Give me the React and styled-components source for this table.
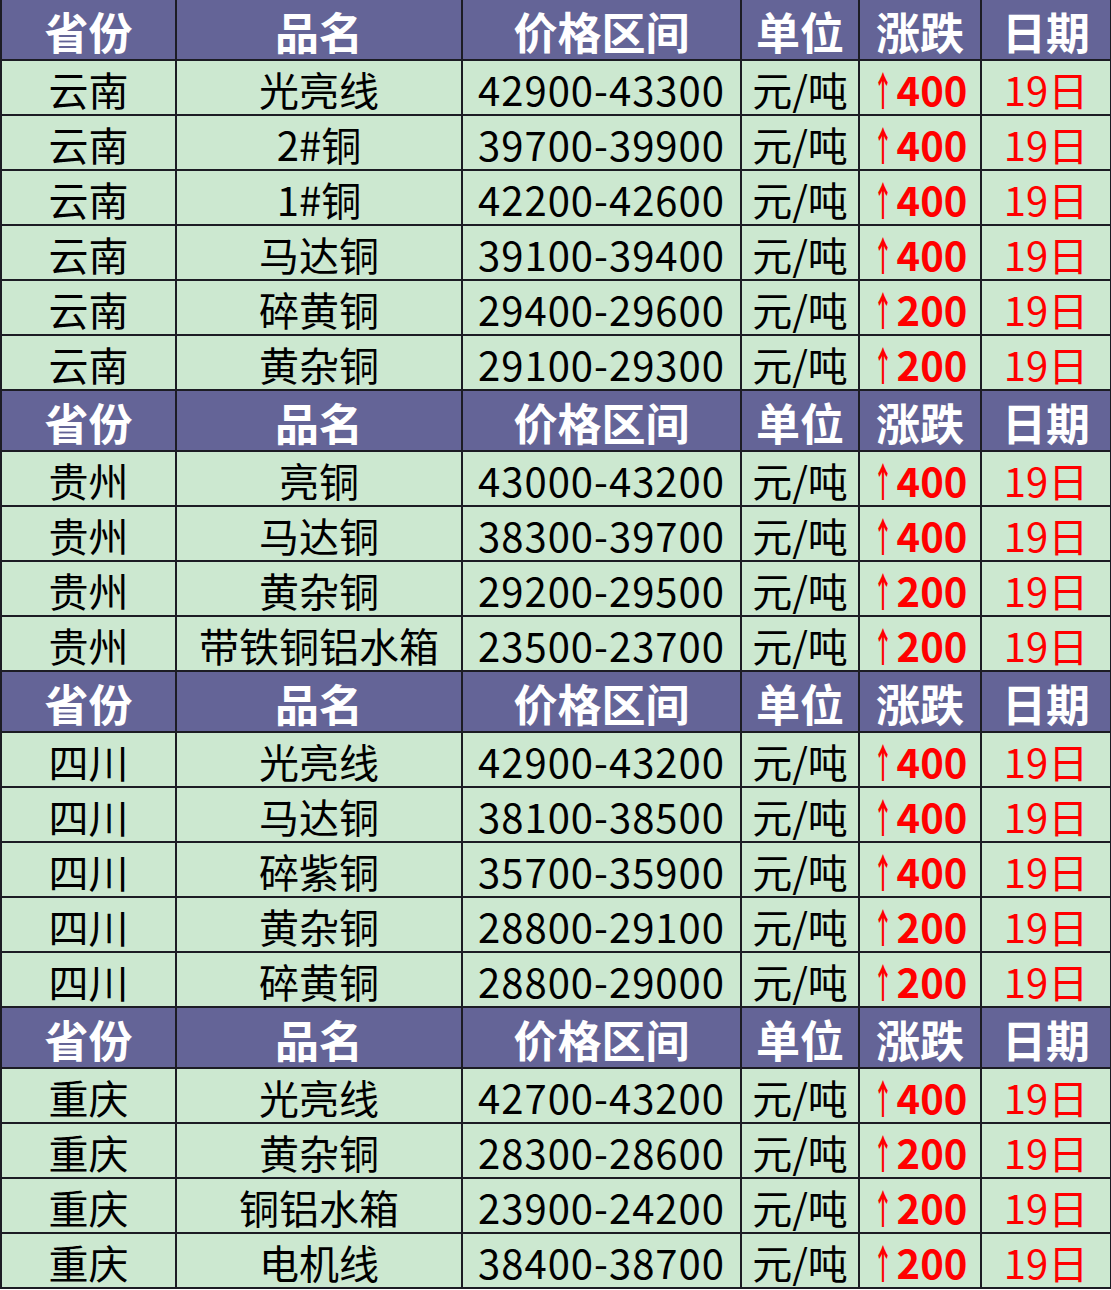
import React from 'react'
import styled, { createGlobalStyle } from 'styled-components'

const GlobalStyle = createGlobalStyle`
  html, body {
    margin: 0;
    padding: 0;
    background: #ffffff;
  }
  body {
    font-family: "Noto Sans CJK SC", "Noto Sans", sans-serif;
  }
`

const COLUMNS = '175px 286px 279px 118px 122px 130px'

const Sheet = styled.div`
  width: 1110px;
  display: flex;
  flex-direction: column;
  border-left: 2px solid #1c1c24;
  box-sizing: border-box;
`

const Row = styled.div`
  display: grid;
  grid-template-columns: ${COLUMNS};
  height: ${({ $head }) => ($head ? '61px' : '55px')};
  background: ${({ $head }) => ($head ? '#646497' : '#cce8d0')};
  box-sizing: border-box;
`

const Cell = styled.div`
  display: flex;
  align-items: center;
  justify-content: center;
  box-sizing: border-box;
  border-right: 2px solid #1c1c24;
  border-bottom: 2px solid #1c1c24;
  white-space: nowrap;
  font-size: ${({ $head }) => ($head ? '44px' : '40px')};
  font-weight: ${({ $head, $bold }) => ($head || $bold ? 700 : 400)};
  color: ${({ $head, $red }) => ($head ? '#ffffff' : $red ? '#ff0000' : '#000000')};
  letter-spacing: ${({ $wide }) => ($wide ? '1px' : '0')};
  line-height: 1;
  padding-top: 2px;
`

const Arrow = styled.span`
  display: inline-block;
  font-family: "Noto Sans CJK SC", sans-serif;
  font-weight: 700;
  font-size: 40px;
  transform: scaleX(0.5);
  margin: 0 -6px 0 -10px;
`

const HEAD = ['省份', '品名', '价格区间', '单位', '涨跌', '日期']

const GROUPS = [
  {
    province: '云南',
    items: [
      ['光亮线', '42900-43300', 400],
      ['2#铜', '39700-39900', 400],
      ['1#铜', '42200-42600', 400],
      ['马达铜', '39100-39400', 400],
      ['碎黄铜', '29400-29600', 200],
      ['黄杂铜', '29100-29300', 200],
    ],
  },
  {
    province: '贵州',
    items: [
      ['亮铜', '43000-43200', 400],
      ['马达铜', '38300-39700', 400],
      ['黄杂铜', '29200-29500', 200],
      ['带铁铜铝水箱', '23500-23700', 200],
    ],
  },
  {
    province: '四川',
    items: [
      ['光亮线', '42900-43200', 400],
      ['马达铜', '38100-38500', 400],
      ['碎紫铜', '35700-35900', 400],
      ['黄杂铜', '28800-29100', 200],
      ['碎黄铜', '28800-29000', 200],
    ],
  },
  {
    province: '重庆',
    items: [
      ['光亮线', '42700-43200', 400],
      ['黄杂铜', '28300-28600', 200],
      ['铜铝水箱', '23900-24200', 200],
      ['电机线', '38400-38700', 200],
    ],
  },
]

function HeadRow() {
  return (
    <Row $head>
      {HEAD.map((h) => (
        <Cell key={h} $head>
          {h}
        </Cell>
      ))}
    </Row>
  )
}

function PriceRow({ province, name, range, change }) {
  return (
    <Row>
      <Cell>{province}</Cell>
      <Cell>{name}</Cell>
      <Cell $wide>{range}</Cell>
      <Cell>元/吨</Cell>
      <Cell $red $bold>
        <Arrow>↑</Arrow>
        {change}
      </Cell>
      <Cell $red>19日</Cell>
    </Row>
  )
}

export default function App() {
  return (
    <>
      <GlobalStyle />
      <Sheet>
        {GROUPS.map((g) => (
          <React.Fragment key={g.province}>
            <HeadRow />
            {g.items.map(([name, range, change]) => (
              <PriceRow
                key={name + range}
                province={g.province}
                name={name}
                range={range}
                change={change}
              />
            ))}
          </React.Fragment>
        ))}
      </Sheet>
    </>
  )
}
